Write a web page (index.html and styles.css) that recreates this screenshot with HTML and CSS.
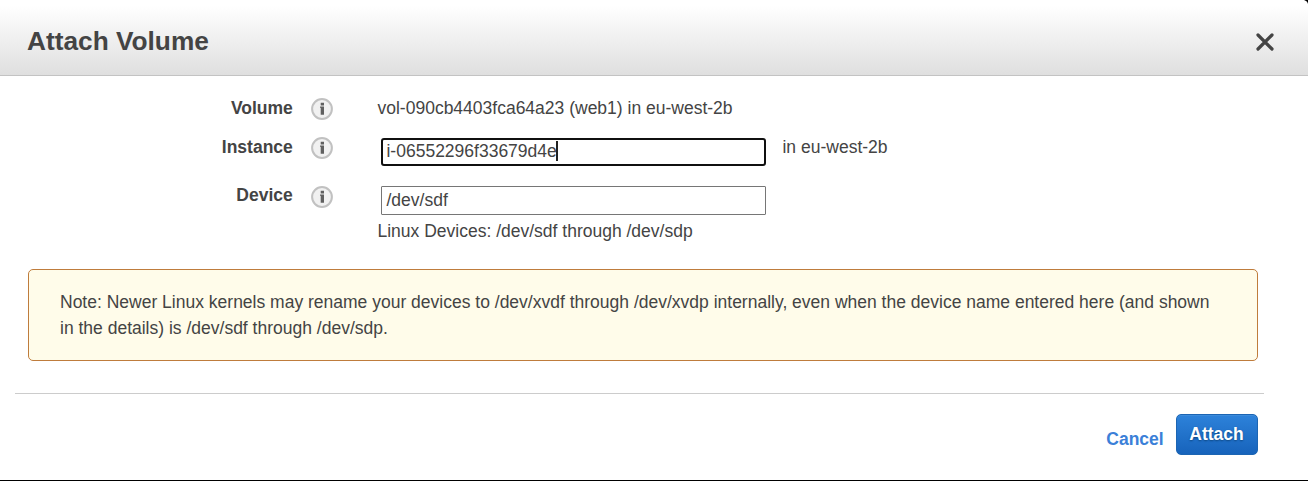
FILE: index.html
```html
<!DOCTYPE html>
<html lang="en">
<head>
<meta charset="utf-8">
<title>Attach Volume</title>
<link rel="stylesheet" href="styles.css">
</head>
<body>
<svg class="defs" width="0" height="0">
  <symbol id="info" viewBox="0 0 22 22">
    <circle cx="11" cy="11" r="9.9" fill="#f1f1f1" stroke="#c1c1c1" stroke-width="2"/>
    <path d="M9.700 4.800h3.300v2.600H9.700zM9 8.400h4v8.400H9.700V9.700H9z" fill="#606060"/>
  </symbol>
</svg>
<main class="dialog">
  <header class="header">
    <h1 class="title">Attach Volume</h1>
    <svg class="close" viewBox="0 0 18 18"><path d="M2 2L16 16M16 2L2 16"/></svg>
    <svg class="corner" viewBox="0 0 4 4"><path d="M0 0H4V4Q3.500 1 0 0Z"/></svg>
  </header>
  <form class="form">
    <div class="row row-volume">
      <label class="label">Volume</label>
      <svg class="info"><use href="#info"/></svg>
      <span class="value">vol-090cb4403fca64a23 (web1) in eu-west-2b</span>
    </div>
    <div class="row row-instance">
      <label class="label">Instance</label>
      <svg class="info"><use href="#info"/></svg>
      <div class="value control">
        <div class="field focused">i-06552296f33679d4e<span class="caret"></span></div>
        <span class="zone">in eu-west-2b</span>
      </div>
    </div>
    <div class="row row-device">
      <label class="label">Device</label>
      <svg class="info"><use href="#info"/></svg>
      <div class="value">
        <div class="field">/dev/sdf</div>
        <div class="hint">Linux Devices: /dev/sdf through /dev/sdp</div>
      </div>
    </div>
  </form>
  <div class="note">Note: Newer Linux kernels may rename your devices to /dev/xvdf through /dev/xvdp internally, even when the device name entered here (and shown<br>in the details) is /dev/sdf through /dev/sdp.</div>
  <footer class="footer">
    <a class="cancel">Cancel</a>
    <button class="attach" type="button">Attach</button>
  </footer>
</main>
</body>
</html>
```
FILE: styles.css
```css
* { box-sizing: border-box; }
body {
  margin: 0;
  background: #fff;
  color: #444;
  font: 17.5px/26px "Liberation Sans", Arial, sans-serif;
}
.defs { display: none; }
.dialog {
  height: 481px;
  overflow: hidden;
  border-bottom: 1px solid #000;
  display: flex;
  flex-direction: column;
}
.header {
  position: relative;
  flex: none;
  height: 76px;
  padding: 0 34px 0 27px;
  display: flex;
  align-items: center;
  justify-content: space-between;
  background: linear-gradient(#fff 8%, #dfdfdf);
  border-bottom: 1px solid #c3c3c3;
}
.title {
  margin: 7px 0 0;
  font-size: 26.25px;
  line-height: 32px;
}
.close {
  width: 18px;
  height: 18px;
  margin-top: 9px;
  fill: none;
  stroke: #444;
  stroke-width: 3.2;
  stroke-linecap: round;
}
.corner {
  position: absolute;
  top: 0;
  right: 0;
  width: 4px;
  height: 4px;
}
.form { height: 193px; padding-top: 19px; flex: none; }
.row {
  display: grid;
  grid-template-columns: 292.8px 22px 1fr;
  column-gap: 18.1px;
  align-items: start;
}
.row-volume { height: 39px; }
.row-instance { height: 48px; }
.label { text-align: right; font-weight: bold; }
.info { width: 22px; height: 22px; margin-top: 4px; }
.row-volume .info,
.row-instance .info { margin-top: 3px; }
.value { padding-left: 26.5px; }
.control { display: flex; gap: 16.5px; }
.field {
  width: 385px;
  height: 29px;
  margin: 4px 0 0 3.5px;
  padding-left: 4.5px;
  border: 1px solid #767676;
  border-radius: 1px;
  line-height: 26px;
  display: flex;
  align-items: flex-start;
  flex: none;
}
.field.focused {
  height: 28px;
  padding-left: 3.5px;
  border: 2px solid #101010;
  border-radius: 3px;
  line-height: 23px;
}
.caret { width: 1.5px; height: 20px; margin: 1px 0 0 -0.5px; background: #222; }
.hint { margin-top: 3px; }
.note {
  flex: none;
  width: 1230px;
  height: 92px;
  margin-left: 28px;
  padding: 19px 0 0 31px;
  border: 1px solid #bf7c3c;
  border-radius: 5px;
  background: #fffcea;
  white-space: nowrap;
}
.footer {
  width: 1249px;
  margin: 32px 0 0 15px;
  padding: 20px 6px 0 0;
  border-top: 1px solid #ccc;
  display: flex;
  justify-content: flex-end;
  align-items: flex-start;
  gap: 12.3px;
}
.cancel { margin-top: 12px; color: #3b80d8; font-weight: bold; }
.attach {
  width: 82px;
  height: 41px;
  padding: 0 1px 2px 0;
  border: 1px solid #1c65b3;
  border-radius: 5px;
  background: linear-gradient(#2d82da, #1763bb);
  box-shadow: inset 0 1px 0 #3c8bdb;
  color: #fff;
  font: bold 17.5px/26px "Liberation Sans", Arial, sans-serif;
  text-shadow: 0 1px 2px #0d4680;
}
```
